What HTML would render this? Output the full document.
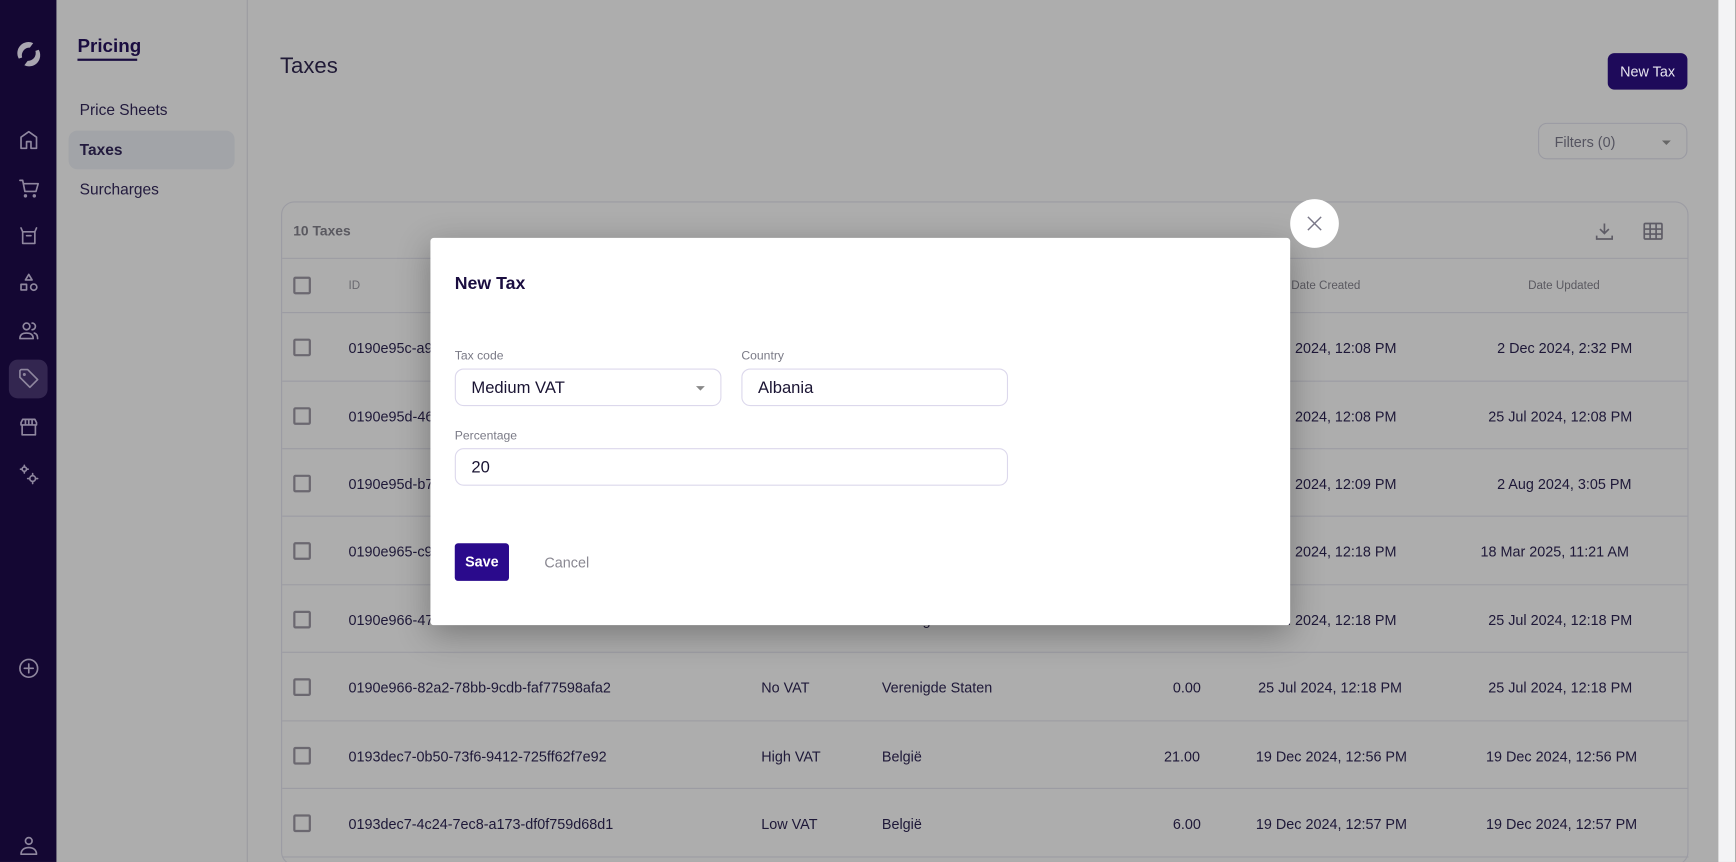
<!DOCTYPE html>
<html><head><meta charset="utf-8">
<style>
*{box-sizing:border-box;margin:0;padding:0}
html,body{width:1736px;height:862px;overflow:hidden;background:#adadad;font-family:"Liberation Sans",Arial,sans-serif}
#w{position:absolute;left:0;top:0;width:1568px;height:779px;overflow:hidden;transform:scale(1.1065);transform-origin:0 0;background:#adadad}
.a{position:absolute}
.rail{left:0;top:0;width:51px;height:779px;background:#140733}
.ic{position:absolute;left:15px;width:22px;height:22px}
.ic svg{width:22px;height:22px;fill:none;stroke:#8f879f;stroke-width:1.5;stroke-linecap:round;stroke-linejoin:round}
.side{left:51px;top:0;width:173px;height:779px;border-right:1px solid #9c9ca0}
.nav{position:absolute;left:21px;font-size:14px;color:#221a3d}
.txt{color:#1e1838;font-size:13px;white-space:nowrap}
.cb{position:absolute;left:10px;width:16px;height:16px;border:2px solid #6b6870;border-radius:2px}
.row{position:absolute;left:0;width:1271px;height:62px;border-top:1px solid #9c9ca3}
.row span{position:absolute;top:24px}
.inp{position:absolute;border:1px solid #dcd8ec;border-radius:8px;height:34px;font-size:15px;color:#1a1433;padding:8px 14px}
.lbl{position:absolute;font-size:11px;color:#7a7a86}
</style></head><body><div id="w">
<div class="a rail">
 <div class="ic" style="top:36px;left:13px;width:26px;height:26px"><svg viewBox="0 0 26 26" style="width:26px;height:26px;stroke:none;fill:#a9a6b0"><path d="M17 3 L14 7 A7 7 0 0 0 7 16 L4 17 A10 10 0 0 1 17 3Z M9 23 L12 19 A7 7 0 0 0 19 10 L22 9 A10 10 0 0 1 9 23Z"/></svg></div>
 <div class="ic" style="top:115px"><svg viewBox="0 0 22 22"><path d="M4 19V9l7-5 7 5v10h-5v-6H9v6z"/></svg></div>
 <div class="ic" style="top:159px"><svg viewBox="0 0 22 22"><path d="M3 4h2.5l2 10h10l2-7H6.5"/><circle cx="8" cy="18" r=".8"/><circle cx="16" cy="18" r=".8"/></svg></div>
 <div class="ic" style="top:202px"><svg viewBox="0 0 22 22"><path d="M4 4l1.5 3.5h11L18 4M5.5 7.5V18h11V7.5M9 11h4"/></svg></div>
 <div class="ic" style="top:245px"><svg viewBox="0 0 22 22"><path d="M11 3l3 5H8z"/><rect x="4" y="12" width="5" height="5"/><circle cx="15.5" cy="14.5" r="2.8"/></svg></div>
 <div class="ic" style="top:288px"><svg viewBox="0 0 22 22"><circle cx="9" cy="7" r="3"/><path d="M3 18c0-4 3-5 6-5s6 1 6 5zM14 4a3 3 0 0 1 0 6M16 13c2 .5 3 2 3 5"/></svg></div>
 <div class="a" style="left:8px;top:325px;width:35px;height:35px;background:#332650;border-radius:8px"></div>
 <div class="ic" style="top:331px"><svg viewBox="0 0 22 22"><path d="M3 4v6l9 9 7-7-9-9H4z"/><circle cx="7" cy="7.5" r=".6"/></svg></div>
 <div class="ic" style="top:375px"><svg viewBox="0 0 22 22"><path d="M4 7l1.5-3h11L18 7v2H4zM5 9v9h12V9M8 4v5M11 4v5M14 4v5"/></svg></div>
 <div class="ic" style="top:418px"><svg viewBox="0 0 22 22"><circle cx="7" cy="6" r="2"/><circle cx="14.5" cy="14.5" r="2.6"/><path d="M7 2.5v1.5M7 8v1.5M3.5 6h1.5M9 6h1.5M14.5 10v1.8M14.5 17.2V19M10 14.5h1.8M17.2 14.5H19"/></svg></div>
 <div class="ic" style="top:593px"><svg viewBox="0 0 22 22"><circle cx="11" cy="11" r="8"/><path d="M11 7v8M7 11h8"/></svg></div>
 <div class="ic" style="top:753px"><svg viewBox="0 0 22 22"><circle cx="11" cy="7" r="3"/><path d="M4 19c0-4 3-6 7-6s7 2 7 6z"/></svg></div>
</div>
<div class="a side">
 <div class="a" style="left:19px;top:32px;font-size:17px;font-weight:bold;color:#1a0d40">Pricing</div>
 <div class="a" style="left:19px;top:53px;width:54px;height:2px;background:#1a0d40"></div>
 <div class="nav" style="top:91px">Price Sheets</div>
 <div class="a" style="left:11px;top:118px;width:150px;height:35px;background:#a2a4a8;border-radius:8px"></div>
 <div class="nav" style="top:127px;font-weight:bold">Taxes</div>
 <div class="nav" style="top:163px">Surcharges</div>
</div>
<div class="a" style="left:1553px;top:0;width:15px;height:779px;background:#f3f3f5"></div>
<div class="a" style="left:253px;top:49px;font-size:20px;color:#201a36">Taxes</div>
<div class="a" style="left:1453px;top:48px;width:72px;height:33px;background:#1e0a5a;border-radius:6px;color:#e8e6f0;font-size:13px;text-align:center;line-height:33px">New Tax</div>
<div class="a" style="left:1390px;top:111px;width:135px;height:33px;border:1px solid #9a9aa2;border-radius:8px;font-size:13px;color:#555460;padding:9px 0 0 14px">Filters (0)<span class="a" style="left:111px;top:15px;border:4px solid transparent;border-top:4px solid #666;border-bottom:0"></span></div>
<div class="a" style="left:254px;top:182px;width:1272px;height:600px;border:1px solid #9c9ca3;border-radius:12px">
 <div class="a" style="left:10px;top:19px;font-size:12.5px;font-weight:bold;color:#5a5960">10 Taxes</div>
 <svg class="a" style="left:1185px;top:16px" width="20" height="20" viewBox="0 0 20 20" fill="none" stroke="#5e5c66" stroke-width="1.5"><path d="M10 3v9M6 8l4 4 4-4M3 14v3h14v-3"/></svg>
 <svg class="a" style="left:1228px;top:15px" width="22" height="22" viewBox="0 0 22 22" fill="none" stroke="#5e5c66" stroke-width="1.5"><rect x="3" y="4" width="16" height="14" rx="1"/><path d="M3 9h16M3 13.5h16M8.3 4v14M13.7 4v14"/></svg>
 <div class="a" style="left:0;top:50px;width:1271px;height:1px;background:#9c9ca3"></div>
 <div class="cb" style="top:67px"></div>
 <div class="a" style="left:60px;top:69px;font-size:10.5px;color:#6a6970">ID</div>
 <div class="a" style="left:912px;top:69px;font-size:10.5px;color:#5a5960">Date Created</div>
 <div class="a" style="left:1126px;top:69px;font-size:10.5px;color:#5a5960">Date Updated</div>
 <div class="row txt" style="top:99px"><div class="cb" style="top:23px"></div><span style="left:60px">0190e95c-a9f1-7c2b-8a11-3d2e1f0c9a11</span><span style="left:877px">25 Jul 2024, 12:08 PM</span><span style="left:1098px">2 Dec 2024, 2:32 PM</span></div>
 <div class="row txt" style="top:161px"><div class="cb" style="top:23px"></div><span style="left:60px">0190e95d-46a2-7b1c-9d22-1e2f3a4b5c6d</span><span style="left:877px">25 Jul 2024, 12:08 PM</span><span style="left:1090px">25 Jul 2024, 12:08 PM</span></div>
 <div class="row txt" style="top:222px"><div class="cb" style="top:23px"></div><span style="left:60px">0190e95d-b7c3-7a2d-8e33-2f3a4b5c6d7e</span><span style="left:877px">25 Jul 2024, 12:09 PM</span><span style="left:1098px">2 Aug 2024, 3:05 PM</span></div>
 <div class="row txt" style="top:283px"><div class="cb" style="top:23px"></div><span style="left:60px">0190e965-c9d4-7b3e-9f44-3a4b5c6d7e8f</span><span style="left:877px">25 Jul 2024, 12:18 PM</span><span style="left:1083px">18 Mar 2025, 11:21 AM</span></div>
 <div class="row txt" style="top:345px"><div class="cb" style="top:23px"></div><span style="left:60px">0190e966-47e5-7c4f-8a55-4b5c6d7e8f90</span><span style="left:542px">Verenigde Staten</span><span style="left:877px">25 Jul 2024, 12:18 PM</span><span style="left:1090px">25 Jul 2024, 12:18 PM</span></div>
 <div class="row txt" style="top:406px"><div class="cb" style="top:23px"></div><span style="left:60px">0190e966-82a2-78bb-9cdb-faf77598afa2</span><span style="left:433px">No VAT</span><span style="left:542px">Verenigde Staten</span><span style="left:805px">0.00</span><span style="left:882px">25 Jul 2024, 12:18 PM</span><span style="left:1090px">25 Jul 2024, 12:18 PM</span></div>
 <div class="row txt" style="top:468px"><div class="cb" style="top:23px"></div><span style="left:60px">0193dec7-0b50-73f6-9412-725ff62f7e92</span><span style="left:433px">High VAT</span><span style="left:542px">België</span><span style="left:797px">21.00</span><span style="left:880px">19 Dec 2024, 12:56 PM</span><span style="left:1088px">19 Dec 2024, 12:56 PM</span></div>
 <div class="row txt" style="top:529px"><div class="cb" style="top:23px"></div><span style="left:60px">0193dec7-4c24-7ec8-a173-df0f759d68d1</span><span style="left:433px">Low VAT</span><span style="left:542px">België</span><span style="left:805px">6.00</span><span style="left:880px">19 Dec 2024, 12:57 PM</span><span style="left:1088px">19 Dec 2024, 12:57 PM</span></div>
 <div class="row" style="top:591px;height:8px"></div>
</div>
<div class="a" style="left:389px;top:215px;width:777px;height:350px;background:#fff;border-radius:3px;box-shadow:0 8px 30px rgba(0,0,0,.3)">
 <div class="a" style="left:22px;top:33px;font-size:16px;font-weight:bold;color:#1a0d40">New Tax</div>
 <div class="lbl" style="left:22px;top:101px">Tax code</div>
 <div class="lbl" style="left:281px;top:101px">Country</div>
 <div class="inp" style="left:22px;top:118px;width:241px">Medium VAT<span class="a" style="left:217px;top:15px;border:4px solid transparent;border-top:4px solid #888;border-bottom:0"></span></div>
 <div class="inp" style="left:281px;top:118px;width:241px">Albania</div>
 <div class="lbl" style="left:22px;top:173px">Percentage</div>
 <div class="inp" style="left:22px;top:190px;width:500px">20</div>
 <div class="a" style="left:22px;top:276px;width:49px;height:34px;background:#2a0a8c;border-radius:3px;color:#fff;font-size:13px;font-weight:bold;text-align:center;line-height:34px">Save</div>
 <div class="a" style="left:103px;top:286px;font-size:13px;color:#8a8892">Cancel</div>
</div>
<div class="a" style="left:1166px;top:180px;width:44px;height:44px;border-radius:50%;background:#fff"><svg class="a" style="left:15px;top:15px" width="14" height="14" viewBox="0 0 14 14" stroke="#7a7888" stroke-width="1.3"><path d="M1 1l12 12M13 1L1 13"/></svg></div>
</div></body></html>
